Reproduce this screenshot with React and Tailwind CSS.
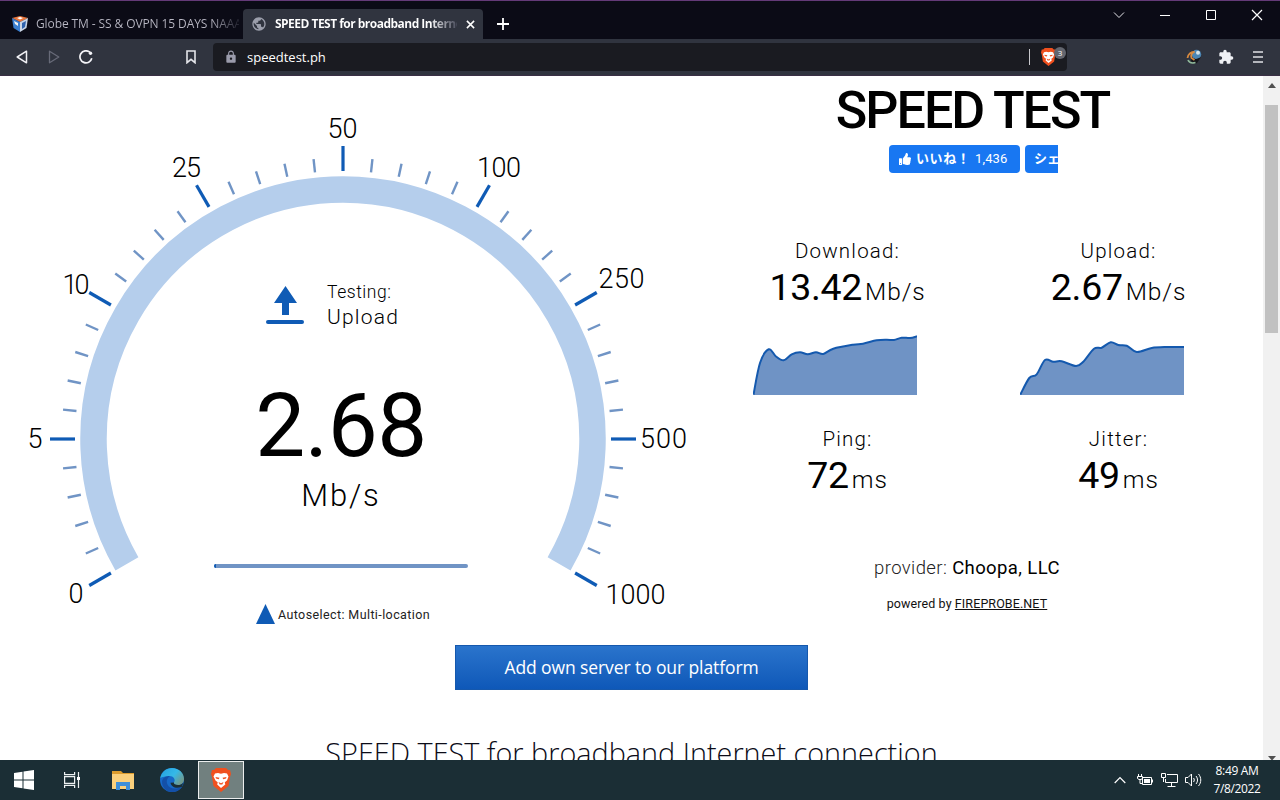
import { FaThumbsUp } from 'react-icons/fa';
import { MdExtension, MdLock, MdPublic } from 'react-icons/md';

const CX = 343;
const CY = 439;

const LABELS = [
  { text: '0', x: 76, y: 603, w: 14 },
  { text: '5', x: 35, y: 448, w: 13 },
  { text: '10', x: 76, y: 294, w: 27 },
  { text: '25', x: 186.5, y: 177, w: 29 },
  { text: '50', x: 342.5, y: 138, w: 30 },
  { text: '100', x: 499, y: 177, w: 44 },
  { text: '250', x: 621.5, y: 288, w: 46 },
  { text: '500', x: 663.5, y: 448, w: 47 },
  { text: '1000', x: 635.5, y: 604, w: 60 },
];

const DOWNLOAD = [
  [0.5, 64.7], [7, 33], [15.7, 19.3], [23, 26.5], [30.7, 30.3], [38.7, 24.3], [47, 22.3],
  [54.7, 24.3], [63, 22.3], [70.3, 24], [80.3, 18.7], [100, 14.7], [110, 13.7], [123.7, 10.3],
  [133.7, 9.7], [141, 10], [148.7, 7.7], [157, 8], [164, 6.3],
];

const UPLOAD = [
  [0.3, 64.7], [9.3, 48], [16.7, 44.3], [25, 30], [33.3, 31.7], [41.7, 31.3], [56, 36],
  [63.3, 31.7], [74, 18.7], [81.7, 17.7], [90.7, 12.3], [98.3, 15], [106.7, 15.7],
  [116.7, 22], [131.7, 18], [146.7, 17], [164, 17],
];

const polar = (deg, r) => {
  const a = (deg * Math.PI) / 180;
  return [CX + r * Math.sin(a), CY - r * Math.cos(a)];
};

const smooth = (pts) =>
  pts.slice(1).reduce((d, p, i) => {
    const p0 = pts[i - 1] || pts[i];
    const p1 = pts[i];
    const p3 = pts[i + 2] || p;
    const c1 = [p1[0] + (p[0] - p0[0]) / 6, p1[1] + (p[1] - p0[1]) / 6];
    const c2 = [p[0] - (p3[0] - p1[0]) / 6, p[1] - (p3[1] - p1[1]) / 6];
    return `${d} C${c1} ${c2} ${p}`;
  }, `M${pts[0]}`);

function BraveLogo({ className }) {
  return (
    <svg viewBox="0 0 20 24" className={className}>
      <path d="M5 0h10l2 2h2l1 4-1 3-1.500 9L10 24l-7.500-6L1 9 0 6l1-4h2z" fill="#f0501e" />
      <path d="M4 5.500 7 5l3 .8L13 5l3 .5 1.500 3-1.500 4-2.200 1.700.5 2.300L10 20l-3.800-3.500.5-2.300L4.500 12.500 2.500 8.500z" fill="#fff" />
      <path d="m4.500 9 4 .8-.8 1.400L5 10.500zM15.500 9l-4 .8.8 1.400 2.700-.7zM7.500 14l2.500 1.300 2.500-1.300-1.200 2.500h-2.600z" fill="#f0501e" />
    </svg>
  );
}

function TabStrip() {
  return (
    <div className="flex h-[39px] border-t border-[#643a78] bg-[#0b0b16] text-[12px]">
      <div className="flex w-[243px] items-center pt-[8px] pl-[12px]">
        <svg viewBox="0 0 16 16" className="h-4 w-4 shrink-0">
          <path d="M0 2 8 0l8 2-8 4z" fill="#e8743b" />
          <path d="M0 2 8 6v10L1.500 12z" fill="#3b7fd0" />
          <path d="m16 2-8 4v10l6.500-4z" fill="#c9d5e6" />
          <path d="m10 7 4-2-1 6-3 2z" fill="#2f62ad" />
          <path d="m2 5 4 2v3L3 8z" fill="#f4f4f4" />
          <path d="m5 2 3-1 3 1-3 1.500z" fill="#fff" />
        </svg>
        <div className="ml-2 w-[203px] overflow-hidden bg-linear-to-r from-[#b9b8c4] from-86% to-[#22222e] bg-clip-text whitespace-nowrap text-transparent tracking-[-0.1px]">
          Globe TM - SS &amp; OVPN 15 DAYS NAAA
        </div>
      </div>
      <div className="mt-[8px] flex w-[240px] items-center rounded-t-[4px] bg-[#30343f] pl-[8px]">
        <MdPublic className="h-4 w-4 shrink-0 text-[#9b9eab]" />
        <div className="ml-2 w-[182px] overflow-hidden bg-linear-to-r from-white from-85% to-[#4a4d5c] bg-clip-text font-bold whitespace-nowrap text-transparent tracking-[-0.52px]">
          SPEED TEST for broadband Internet
        </div>
        <svg viewBox="0 0 10 10" className="ml-[9px] h-[9px] w-[9px]" stroke="#fff" strokeWidth="1.7">
          <path d="m1 1 8 8M9 1 1 9" />
        </svg>
      </div>
      <svg viewBox="0 0 12 12" className="mt-[17px] ml-[14px] h-3 w-3" stroke="#fff" strokeWidth="1.8">
        <path d="M6 0v12M0 6h12" />
      </svg>
      <div className="mt-[8px] mr-[17px] ml-auto flex h-3 items-center gap-[34px]">
        <svg viewBox="0 0 12 12" className="h-3 w-3" fill="none" stroke="#e6e6ea">
          <path d="m1 3.500 5 5 5-5" />
        </svg>
        <svg viewBox="0 0 12 12" className="h-3 w-3" fill="none" stroke="#fff">
          <path d="M1 6.500h10" />
        </svg>
        <svg viewBox="0 0 12 12" className="h-3 w-3" fill="none" stroke="#fff">
          <path d="M1.500 1.500h9v9h-9z" />
        </svg>
        <svg viewBox="0 0 12 12" className="h-3 w-3" fill="none" stroke="#fff" strokeWidth="1.200">
          <path d="m1 1 10 10M11 1 1 11" />
        </svg>
      </div>
    </div>
  );
}

function Toolbar() {
  return (
    <div className="flex h-[37px] items-center border-b border-[#3a2f45] bg-[#30343f]">
      <svg viewBox="0 0 12 14" className="ml-[16px] h-[14px] w-3" fill="none" stroke="#f0f0f4" strokeWidth="1.500" strokeLinejoin="round">
        <path d="M10.500 1.200v11.600L1.200 7z" />
      </svg>
      <svg viewBox="0 0 12 14" className="ml-[20px] h-[14px] w-3" fill="none" stroke="#676a78" strokeWidth="1.300" strokeLinejoin="round">
        <path d="M1.500 1.200v11.600L10.800 7z" />
      </svg>
      <svg viewBox="0 0 14 14" className="ml-[19px] h-[14px] w-[14px]" fill="none" stroke="#f4f4f8" strokeWidth="1.700">
        <path d="M12.800 8.200A6 6 0 1 1 10.800 2.200" />
        <circle cx="11.500" cy="3.200" r="1.700" fill="#f4f4f8" stroke="none" />
      </svg>
      <svg viewBox="0 0 10 14" className="ml-[93px] h-[14px] w-[10px]" fill="none" stroke="#e4e5ea" strokeWidth="1.600">
        <path d="M1 1h8v11.700L5 9.300l-4 3.400z" />
      </svg>
      <div className="ml-[17px] flex h-[28px] w-[854px] items-center rounded-[4px] bg-[#1a1b21]">
        <MdLock className="ml-[11px] h-[14px] w-[14px] text-[#9a9bab]" />
        <span className="mt-px ml-[9px] text-[13px] text-white">speedtest.ph</span>
        <div className="ml-auto h-4 w-px bg-[#c8c8cc]" />
        <div className="relative mr-[1px] ml-[11px] w-[25px]">
          <BraveLogo className="h-[18px] w-[15px]" />
          <span className="absolute -top-[1px] left-[13px] flex h-3 w-3 items-center justify-center rounded-full bg-[#63666f] text-[8px] text-white">
            3
          </span>
        </div>
      </div>
      <svg viewBox="0 0 16 16" className="ml-auto h-4 w-4">
        <circle cx="10.500" cy="5.500" r="4.700" fill="#4c86b4" />
        <circle cx="12" cy="3.800" r="2" fill="#d6e4e8" />
        <path d="M6 8c2 3 6 2 9 0l-4 6c-2 1-4 1-6-2z" fill="#15161b" />
        <path d="M1.500 9C2 5 5 2.500 8.500 3 5.500 4 4.500 6.500 5.500 9l3 2" fill="none" stroke="#d98a3f" strokeWidth="1.800" />
        <path d="M2 11c1 2.500 4 3.500 7.500 2.500" fill="none" stroke="#8fb89a" strokeWidth="1.600" />
      </svg>
      <MdExtension className="ml-[16px] h-4 w-4 text-[#eff1f5]" />
      <svg viewBox="0 0 10 12" className="mr-[17px] ml-[19px] h-3 w-[10px]" stroke="#e0e1e6" strokeWidth="1.700">
        <path d="M0 1h10M0 6h10M0 11h10" />
      </svg>
    </div>
  );
}

function Gauge() {
  const ticks = Array.from({ length: 41 }, (_, i) => ({ deg: -120 + i * 6, major: i % 5 === 0 }));
  const [sx, sy] = polar(-120, 249.5);
  const [ex, ey] = polar(120, 249.5);

  return (
    <svg viewBox="0 76 686 569" className="h-[569px] w-[686px]">
      <path d={`M${sx} ${sy} A249.5 249.5 0 1 1 ${ex} ${ey}`} fill="none" stroke="#b5ceec" strokeWidth="26.500" />
      {ticks.map(({ deg, major }) => {
        const [x1, y1] = polar(deg, 268);
        const [x2, y2] = polar(deg, major ? 293 : 281.5);
        return (
          <line
            key={deg}
            x1={x1}
            y1={y1}
            x2={x2}
            y2={y2}
            stroke={major ? '#0f5bb5' : '#7094c5'}
            strokeWidth={major ? 3.2 : 2.4}
          />
        );
      })}
      {LABELS.map((l) => (
        <text
          key={l.text}
          x={l.x}
          y={l.y}
          textAnchor="middle"
          textLength={l.w}
          className="fill-black text-[27px] font-light"
        >
          {l.text}
        </text>
      ))}
    </svg>
  );
}

function GaugePanel() {
  return (
    <div className="relative w-[686px] font-['Roboto',sans-serif] text-black">
      <Gauge />
      <div className="absolute inset-0 flex flex-col items-center pt-[204px] pr-[4px]">
        <div className="flex w-[150px] items-start">
          <svg viewBox="0 0 38 38" className="mt-[6px] h-[38px] w-[38px]" fill="#0f5bb5">
            <path d="M19.500 0 31 17h-8v12h-7V17H8z" />
            <rect y="34" width="38" height="4" rx="2" />
          </svg>
          <div className="-mr-4 ml-[23px] whitespace-nowrap">
            <div className="text-[17.5px] leading-6 font-light tracking-[0.55px]">Testing:</div>
            <div className="mt-px text-[21px] leading-6 font-light tracking-[1.2px]">Upload</div>
          </div>
        </div>
        <div className="mt-[45px] text-[89px] leading-[104px] tracking-[-0.5px]">2.68</div>
        <div className="-mt-[2px] text-[31px] leading-[40px] font-light tracking-[1.8px]">Mb/s</div>
        <div className="mt-[48px] h-1 w-[254px] rounded-full bg-[#7094c5]">
          <div className="h-1 w-[2px] rounded-l-full bg-[#0f5bb5]" />
        </div>
        <div className="mt-[35px] flex items-center gap-[3px] pl-[4px]">
          <svg viewBox="0 0 19 20" className="h-5 w-[19px]" fill="#0f5bb5">
            <path d="M9.500 0 19 20H0z" />
          </svg>
          <span className="mt-[2px] text-[12.5px] leading-5 tracking-[0.4px] text-[#222]">Autoselect: Multi-location</span>
        </div>
      </div>
    </div>
  );
}

function Chart({ points }) {
  const line = smooth(points);
  return (
    <svg viewBox="0 0 164 65" className="h-[65px] w-[164px]">
      <path d={`${line} V65 H0 Z`} fill="#6f93c5" />
      <path d={line} fill="none" stroke="#1459ae" strokeWidth="2" />
    </svg>
  );
}

function Stat({ label, value, unit }) {
  return (
    <div className="flex flex-col items-center">
      <div className="text-[20.5px] leading-6 font-light tracking-[1.2px]">{label}</div>
      <div className="flex h-[49px] items-baseline gap-[3px] leading-[49px]">
        <span className="text-[37.5px] tracking-[-0.3px]">{value}</span>
        <span className="text-[24.5px] font-light tracking-[0.9px]">{unit}</span>
      </div>
    </div>
  );
}

function ResultsPanel() {
  return (
    <div className="flex w-[577px] flex-col font-['Roboto',sans-serif] text-black">
      <h1 className="mt-[5px] pr-1 text-center text-[52px] leading-[60px] font-medium tracking-[-2px]">SPEED TEST</h1>
      <div className="mt-[4px] ml-[203px] flex w-[169px] gap-[5px] overflow-hidden font-['Liberation_Sans','Noto_Sans_CJK_JP',sans-serif] text-[13px] text-white">
        <div className="flex h-7 w-[131px] shrink-0 items-center rounded-[4px] bg-[#1877f2] pl-[10px]">
          <FaThumbsUp className="h-3 w-3" />
          <span className="ml-[5px] w-[52px] font-bold whitespace-nowrap tracking-[0.6px]">いいね！</span>
          <span className="ml-[7px] font-['Roboto',sans-serif] tracking-[0.15px]">1,436</span>
        </div>
        <div className="flex h-7 w-[70px] shrink-0 items-center rounded-[4px] bg-[#1877f2] pl-[9px] font-bold">シェア</div>
      </div>
      <div className="mt-[66px] ml-[26px] grid grid-cols-[271px_271px]">
        <Stat label="Download:" value="13.42" unit="Mb/s" />
        <Stat label="Upload:" value="2.67" unit="Mb/s" />
      </div>
      <div className="mt-[18px] ml-[67px] flex gap-[103px]">
        <Chart points={DOWNLOAD} />
        <Chart points={UPLOAD} />
      </div>
      <div className="mt-[32px] ml-[26px] grid grid-cols-[271px_271px]">
        <Stat label="Ping:" value="72" unit="ms" />
        <Stat label="Jitter:" value="49" unit="ms" />
      </div>
      <div className="mt-[56px] pr-[15px] text-center text-[18.5px] leading-6 font-light tracking-[0.4px]">
        <span className="text-[#222]">provider:</span> <span className="font-normal">Choopa, LLC</span>
      </div>
      <div className="mt-[14px] pr-[15px] text-center text-[12.5px] leading-5 tracking-[0.1px] text-[#111]">
        powered by <span className="underline">FIREPROBE.NET</span>
      </div>
    </div>
  );
}

function Scrollbar() {
  return (
    <div className="flex w-[17px] flex-col items-center bg-[#f1f1f1]">
      <svg viewBox="0 0 8 5" className="mt-[7px] h-[5px] w-2" fill="#505050">
        <path d="m4 0 4 5H0z" />
      </svg>
      <div className="mt-[17px] h-[228px] w-[13px] bg-[#c1c1c1]" />
      <svg viewBox="0 0 8 4" className="mt-auto h-1 w-2" fill="#505050">
        <path d="M0 0h8L4.500 4h-1z" />
      </svg>
    </div>
  );
}

function Taskbar() {
  return (
    <div className="flex h-[40px] items-center bg-[#1b2e35] text-white">
      <svg viewBox="0 0 20 20" className="ml-[14px] h-5 w-5" fill="#fff">
        <path d="m0 3 8.500-1.200v7.700H0zM9.500 1.600 20 0v9.500H9.500zM0 10.500h8.500v7.700L0 17zM9.500 10.500H20V20L9.500 18.400z" />
      </svg>
      <svg viewBox="0 0 17 16" className="ml-[30px] h-4 w-[17px]" fill="none" stroke="#eef2f3" strokeWidth="1.200">
        <path d="M.6 0v2.600h10V0M.6 4.600h10v6.800H.6zM.6 16v-2.600h10V16M14.500 0v16" />
        <path d="M13 5h3v3h-3z" fill="#fff" stroke="none" />
      </svg>
      <svg viewBox="0 0 22 20" className="ml-[31px] h-5 w-[22px]">
        <path d="M0 1h9l2 2h11v16H0z" fill="#dd9c2d" />
        <path d="M0 4h22v15H0z" fill="#fbd07c" />
        <path d="M4 12h14v8h-4v-4H8v4H4z" fill="#3e8fd9" />
      </svg>
      <svg viewBox="0 0 24 24" className="ml-[26px] h-6 w-6">
        <defs>
          <linearGradient id="edgeTop" x1="0" y1="0" x2="1" y2="0.6">
            <stop offset="0" stopColor="#249fe0" />
            <stop offset="0.6" stopColor="#35b9e8" />
            <stop offset="1" stopColor="#6f9a8e" />
          </linearGradient>
        </defs>
        <circle cx="12" cy="12" r="12" fill="#1769c8" />
        <path d="M.3 10C1.500 4 6 0 12 0c7 0 12 5 12 11 0 4-3 6-6 6-3 0-4.500-1-4-2.500 2-3-.5-6.500-4.500-6.500C5.500 8 2 9 .3 10z" fill="url(#edgeTop)" />
        <path d="M10 8c-3 2-4 5-2.500 8.500 2 4 7.500 5.500 14.500 2.200C20 22 16 24 12 24 6 24 2 19 2 14c0-4 4-6 8-6z" fill="#1450a8" />
        <path d="M14 14.500c-.5 1.500 1 2.500 4 2.500 2 0 4-.8 5.200-2.300l-1.200 4c-6 2.500-11 0-11.500-4z" fill="#1b2e35" />
      </svg>
      <div className="ml-[14px] flex h-[38px] w-[46px] items-center justify-center border border-[#eceeee] bg-[#71807f]">
        <BraveLogo className="h-[24px] w-[20px]" />
      </div>
      <div className="ml-auto flex items-center">
        <svg viewBox="0 0 12 8" className="h-2 w-3" fill="none" stroke="#fff" strokeWidth="1.200">
          <path d="m.7 7 5.300-5.500L11.300 7" />
        </svg>
        <svg viewBox="0 0 16 12" className="ml-[11px] h-3 w-4" fill="none" stroke="#fff">
          <path d="M5.500 3.500h9v7h-9zM1.500 0v2M4.500 0v2M.5 2.500h5v2l-1.500 1h-2L.5 4.500zM3 5.500v4h2" />
          <path d="M7 5h6v4H7zM15 5.500h1v3h-1z" fill="#fff" stroke="none" />
        </svg>
        <svg viewBox="0 0 17 14" className="ml-[8px] h-[14px] w-[17px]" fill="none" stroke="#fff">
          <path d="M6 1.500h10.500v8H4.500V6M10.500 9.500v3.500M6.500 13.500h8M.5.500h4v4h-4zM2.500 4.500V9" />
        </svg>
        <svg viewBox="0 0 17 14" className="ml-[7px] h-[14px] w-[17px]" fill="none" stroke="#fff">
          <path d="M.5 4.500h2.500L6.500 1v12L3 9.500H.5zM8.500 5c1 1.200 1 2.800 0 4M11 3c2 2.500 2 5.500 0 8M13.500 1c3 3.500 3 8.500 0 12" />
        </svg>
        <div className="mr-[14px] ml-[6px] flex w-[58px] flex-col items-center text-[12px] leading-[18px] tracking-[-0.35px] whitespace-nowrap">
          <span>8:49 AM</span>
          <span>7/8/2022</span>
        </div>
      </div>
    </div>
  );
}

export default function App() {
  return (
    <div className="flex h-[800px] w-[1280px] flex-col overflow-hidden font-['Open_Sans',sans-serif]">
      <TabStrip />
      <Toolbar />
      <div className="flex h-[684px] bg-white">
        <div className="flex w-[1263px] flex-col items-center overflow-hidden">
          <div className="flex h-[569px] w-full shrink-0">
            <GaugePanel />
            <ResultsPanel />
          </div>
          <button className="h-[45px] w-[353px] shrink-0 border border-[#1558ad] bg-linear-to-b from-[#2a74cc] to-[#0e58b8] text-[17.5px] tracking-[-0.1px] text-white">
            Add own server to our platform
          </button>
          <h2 className="mt-[43px] shrink-0 text-[28.8px] leading-[40px] font-light whitespace-nowrap text-[#0c0c18]">
            SPEED TEST for broadband Internet connection
          </h2>
        </div>
        <Scrollbar />
      </div>
      <Taskbar />
    </div>
  );
}
